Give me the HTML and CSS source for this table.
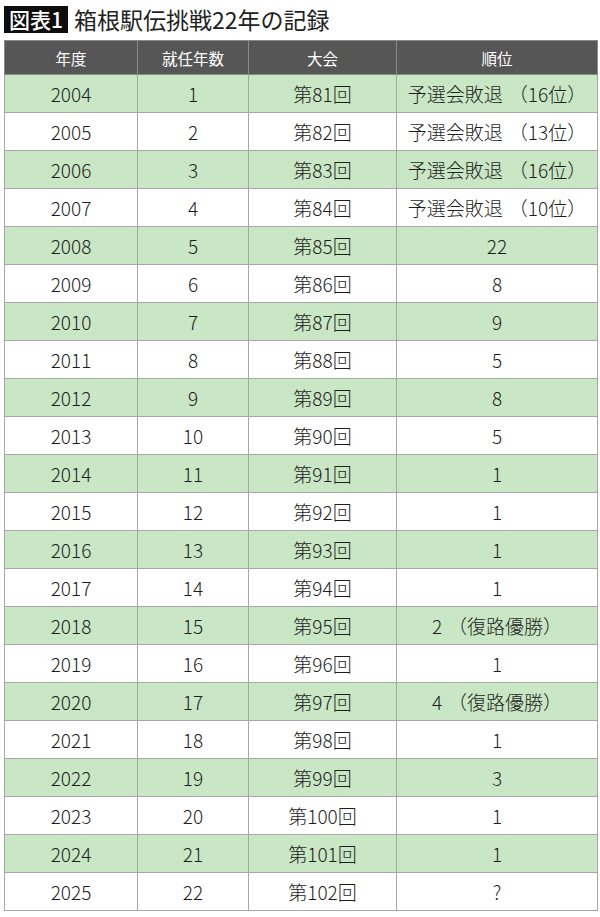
FILE: index.html
```html
<!DOCTYPE html>
<html lang="ja">
<head>
<meta charset="utf-8">
<link rel="stylesheet" href="styles.css">
</head>
<body>
<div class="page">
  <div class="title">
    <span class="badge">図表1</span>
    <span class="title-text">箱根駅伝挑戦22年の記録</span>
  </div>
  <table class="record">
    <colgroup>
      <col class="c1"><col class="c2"><col class="c3"><col class="c4">
    </colgroup>
    <thead>
      <tr><th>年度</th><th>就任年数</th><th>大会</th><th>順位</th></tr>
    </thead>
    <tbody>
      <tr class="g"><td>2004</td><td>1</td><td>第81回</td><td>予選会敗退<span class="note">（16位）</span></td></tr>
      <tr><td>2005</td><td>2</td><td>第82回</td><td>予選会敗退<span class="note">（13位）</span></td></tr>
      <tr class="g"><td>2006</td><td>3</td><td>第83回</td><td>予選会敗退<span class="note">（16位）</span></td></tr>
      <tr><td>2007</td><td>4</td><td>第84回</td><td>予選会敗退<span class="note">（10位）</span></td></tr>
      <tr class="g"><td>2008</td><td>5</td><td>第85回</td><td>22</td></tr>
      <tr><td>2009</td><td>6</td><td>第86回</td><td>8</td></tr>
      <tr class="g"><td>2010</td><td>7</td><td>第87回</td><td>9</td></tr>
      <tr><td>2011</td><td>8</td><td>第88回</td><td>5</td></tr>
      <tr class="g"><td>2012</td><td>9</td><td>第89回</td><td>8</td></tr>
      <tr><td>2013</td><td>10</td><td>第90回</td><td>5</td></tr>
      <tr class="g"><td>2014</td><td>11</td><td>第91回</td><td>1</td></tr>
      <tr><td>2015</td><td>12</td><td>第92回</td><td>1</td></tr>
      <tr class="g"><td>2016</td><td>13</td><td>第93回</td><td>1</td></tr>
      <tr><td>2017</td><td>14</td><td>第94回</td><td>1</td></tr>
      <tr class="g"><td>2018</td><td>15</td><td>第95回</td><td>2<span class="note">（復路優勝）</span></td></tr>
      <tr><td>2019</td><td>16</td><td>第96回</td><td>1</td></tr>
      <tr class="g"><td>2020</td><td>17</td><td>第97回</td><td>4<span class="note">（復路優勝）</span></td></tr>
      <tr><td>2021</td><td>18</td><td>第98回</td><td>1</td></tr>
      <tr class="g"><td>2022</td><td>19</td><td>第99回</td><td>3</td></tr>
      <tr><td>2023</td><td>20</td><td>第100回</td><td>1</td></tr>
      <tr class="g"><td>2024</td><td>21</td><td>第101回</td><td>1</td></tr>
      <tr><td>2025</td><td>22</td><td>第102回</td><td>?</td></tr>
    </tbody>
  </table>
</div>
</body>
</html>
```

FILE: styles.css
```css
html, body {
  margin: 0;
  padding: 0;
  background: #ffffff;
}

body {
  font-family: "Noto Sans CJK JP", "Noto Sans", sans-serif;
  color: #222222;
}

.page {
  padding: 5px 4px 0 4px;
}

.title {
  display: flex;
  align-items: center;
  gap: 6px;
  height: 28px;
}

.badge {
  background: #0d0d0d;
  color: #ffffff;
  font-size: 21px;
  font-weight: 500;
  line-height: 27px;
  height: 27px;
  padding: 0 5px 0 5px;
}

.title-text {
  font-size: 23px;
  font-weight: 400;
  line-height: 28px;
  color: #222222;
}

.record {
  margin-top: 7px;
  width: 593px;
  border-collapse: collapse;
  table-layout: fixed;
}

.c1 { width: 133px; }
.c2 { width: 111px; }
.c3 { width: 148px; }
.c4 { width: 201px; }

.record th {
  background: #565656;
  color: #ffffff;
  font-weight: 400;
  font-size: 15.5px;
  height: 33px;
  padding: 0;
  border: 1px solid #8a8a8a;
  text-align: center;
  vertical-align: middle;
}

.record td {
  height: 37px;
  padding: 0;
  font-size: 19px;
  font-weight: 300;
  text-align: center;
  vertical-align: middle;
  border: 1px solid #a6a6a6;
  color: #1e1e1e;
}

.record .note {
  margin-left: 6px;
}

.record tr.g td {
  background: #c9e6c5;
}
```
